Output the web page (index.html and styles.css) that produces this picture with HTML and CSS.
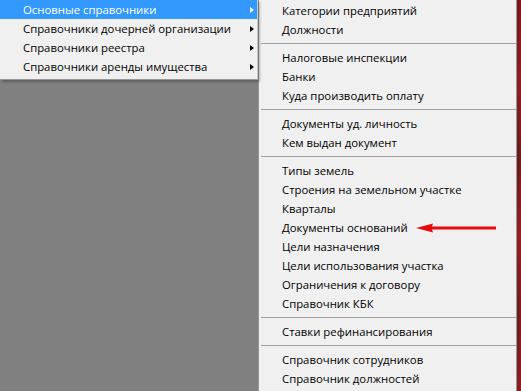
FILE: index.html
```html
<!DOCTYPE html>
<html lang="ru">
<head>
<meta charset="utf-8">
<title>Справочники</title>
<link rel="stylesheet" href="styles.css">
</head>
<body>
<div class="screen">
  <ul class="menu menu-main">
    <li class="item active"><span>Основные справочники</span><i class="sub"></i></li>
    <li class="item"><span>Справочники дочерней организации</span><i class="sub"></i></li>
    <li class="item"><span>Справочники реестра</span><i class="sub"></i></li>
    <li class="item"><span>Справочники аренды имущества</span><i class="sub"></i></li>
  </ul>
  <ul class="menu menu-sub">
    <li class="item">Категории предприятий</li>
    <li class="item">Должности</li>
    <li class="sep"></li>
    <li class="item">Налоговые инспекции</li>
    <li class="item">Банки</li>
    <li class="item">Куда производить оплату</li>
    <li class="sep"></li>
    <li class="item">Документы уд. личность</li>
    <li class="item">Кем выдан документ</li>
    <li class="sep"></li>
    <li class="item">Типы земель</li>
    <li class="item">Строения на земельном участке</li>
    <li class="item">Кварталы</li>
    <li class="item pointed">Документы оснований
      <svg class="pointer" width="84" height="10" viewBox="0 0 84 10"><polygon points="0,5 17,0.5 16,3.6 80,3.6 80,6.4 16,6.4 17,9.5" fill="#e60a0a"/></svg>
    </li>
    <li class="item">Цели назначения</li>
    <li class="item">Цели использования участка</li>
    <li class="item">Ограничения к договору</li>
    <li class="item">Справочник КБК</li>
    <li class="sep"></li>
    <li class="item">Ставки рефинансирования</li>
    <li class="sep"></li>
    <li class="item">Справочник сотрудников</li>
    <li class="item">Справочник должностей</li>
  </ul>
  <div class="backdrop-edge"></div>
</div>
</body>
</html>
```
FILE: styles.css
```css
html, body {
  margin: 0;
  padding: 0;
  height: 100%;
  background: #808080;
  overflow: hidden;
}
.screen {
  display: flex;
  align-items: flex-start;
  height: 391px;
  font-family: "Open Sans", "Noto Sans", sans-serif;
  font-size: 11.35px;
  color: #000;
}
.menu {
  list-style: none;
  margin: 0;
  background: #f0f0f0;
  box-sizing: border-box;
}
.menu-main {
  width: 258px;
  padding: 0 0 3px 0;
  border-right: 1px solid #c8c8c8;
  border-bottom: 1px solid #979797;
  box-shadow: 2px 2px 2px rgba(0,0,0,0.25);
  position: relative;
  z-index: 1;
}
.menu-main .item {
  height: 19px;
  display: flex;
  align-items: center;
  justify-content: space-between;
  padding: 0 3px 0 23px;
}
.menu-main .item.active {
  background: #3399ff;
  color: #fff;
}
.sub {
  width: 0;
  height: 0;
  border-top: 3.5px solid transparent;
  border-bottom: 3.5px solid transparent;
  border-left: 4px solid #000;
}
.active .sub {
  border-left-color: #fff;
}
.menu-sub {
  width: 259px;
  height: 391px;
  padding: 1px 0 0 0;
  border-left: 1px solid #979797;
  border-right: 1px solid #979797;
}
.menu-sub .item {
  height: 19px;
  line-height: 19px;
  padding-left: 23px;
  position: relative;
  white-space: nowrap;
}
.sep {
  height: 9px;
  display: flex;
  align-items: center;
  padding: 0 0 0 2px;
}
.sep::before {
  content: "";
  display: block;
  flex: 1;
  height: 1px;
  background: #a0a0a0;
}
.pointer {
  position: absolute;
  left: 157px;
  top: 5px;
}
.backdrop-edge {
  flex: 1;
  height: 391px;
  background: linear-gradient(180deg, #7a1515 0%, #8c1f1f 20%, #6e1818 40%, #922020 60%, #751a1a 80%, #8a1e1e 100%);
}
```
